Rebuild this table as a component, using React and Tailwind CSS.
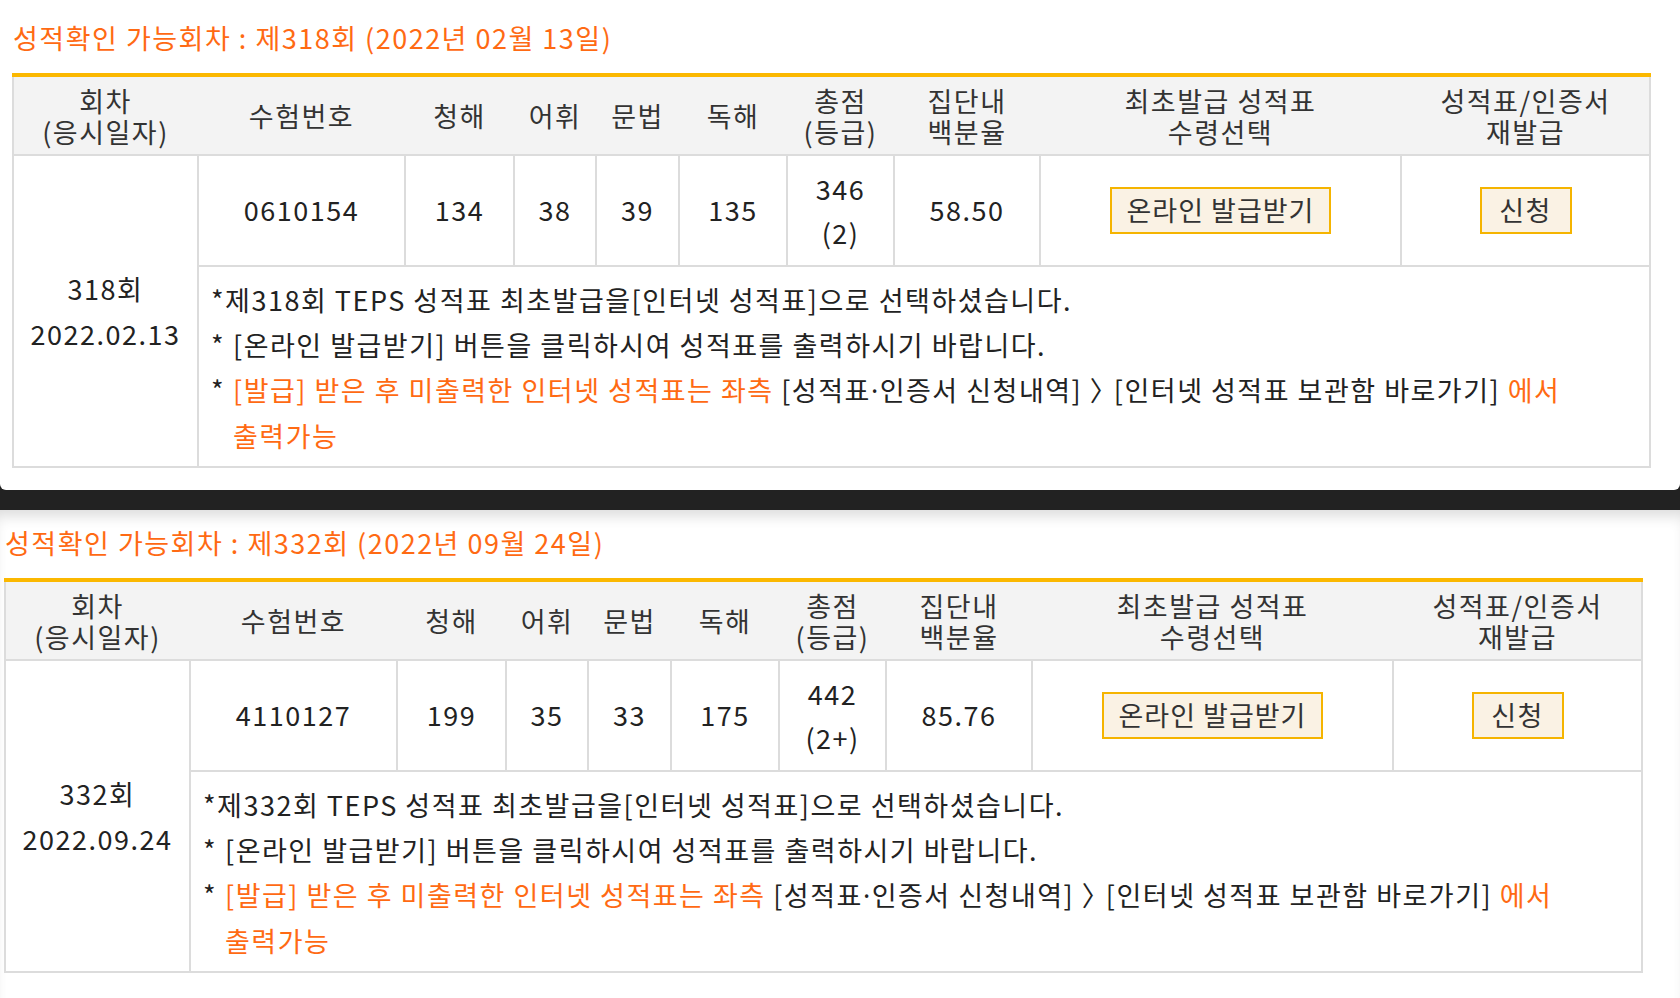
import React from 'react'

const sessions = [
  {
    no: '318',
    title: '제318회 (2022년 02월 13일)',
    date: '2022.02.13',
    examNo: '0610154',
    scores: ['134', '38', '39', '135'],
    total: '346',
    grade: '(2)',
    pct: '58.50',
  },
  {
    no: '332',
    title: '제332회 (2022년 09월 24일)',
    date: '2022.09.24',
    examNo: '4110127',
    scores: ['199', '35', '33', '175'],
    total: '442',
    grade: '(2+)',
    pct: '85.76',
  },
]

const cols = 'grid-cols-[183px_205px_107px_80px_81px_106px_105px_144px_359px_247px]'

function ScoreTable({ s }) {
  return (
    <div className="w-[1639px] border-t-4 border-[#fbb800]">
      {/* header */}
      <div className={`grid ${cols} gap-x-[2px] h-[77px] border-x-2 border-[#dcdcdc] bg-[#f3f3f3] text-[#333] leading-[31px] text-center`}>
        <div className="flex flex-col justify-center">회차<br />(응시일자)</div>
        <div className="flex items-center justify-center">수험번호</div>
        <div className="flex items-center justify-center">청해</div>
        <div className="flex items-center justify-center">어휘</div>
        <div className="flex items-center justify-center">문법</div>
        <div className="flex items-center justify-center">독해</div>
        <div className="flex flex-col justify-center">총점<br />(등급)</div>
        <div className="flex flex-col justify-center">집단내<br />백분율</div>
        <div className="flex flex-col justify-center">최초발급 성적표<br />수령선택</div>
        <div className="flex flex-col justify-center">성적표/인증서<br />재발급</div>
      </div>

      {/* body */}
      <div className={`grid ${cols} grid-rows-[109px_199px] gap-[2px] p-[2px] bg-[#dcdcdc] text-[#222] text-center`}>
        <div className="row-span-2 bg-white flex flex-col items-center justify-center leading-[45px]">
          <span>{s.no}회</span>
          <span>{s.date}</span>
        </div>
        <div className="bg-white flex items-center justify-center">{s.examNo}</div>
        {s.scores.map((v, i) => (
          <div key={i} className="bg-white flex items-center justify-center">{v}</div>
        ))}
        <div className="bg-white flex flex-col items-center justify-center leading-[44px]">
          <span>{s.total}</span>
          <span>{s.grade}</span>
        </div>
        <div className="bg-white flex items-center justify-center">{s.pct}</div>
        <div className="bg-white flex items-center justify-center">
          <button className="w-[221px] h-[47px] border-2 border-[#f5b400] bg-[#faf2e4] text-[#333] tracking-[1px]">온라인 발급받기</button>
        </div>
        <div className="bg-white flex items-center justify-center">
          <button className="w-[92px] h-[47px] border-2 border-[#f5b400] bg-[#faf2e4] text-[#333]">신청</button>
        </div>

        <div className="col-span-9 bg-white text-left text-[#222] leading-[45px] pt-[10px] pl-[12px] pr-[8px]">
          <p>*제{s.no}회 TEPS 성적표 최초발급을[인터넷 성적표]으로 선택하셨습니다.</p>
          <p className="flex">
            <span className="w-[22px] shrink-0">*</span>
            <span>[온라인 발급받기] 버튼을 클릭하시여 성적표를 출력하시기 바랍니다.</span>
          </p>
          <p className="flex">
            <span className="w-[22px] shrink-0">*</span>
            <span>
              <span className="text-[#ff6a13]">[발급] 받은 후 미출력한 인터넷 성적표는 좌측</span>{' '}
              [성적표<span className="font-['Noto_Sans',sans-serif]">·</span>인증서 신청내역]{' '}
              <span className="inline-block -mr-[12px]">〉</span>{' '}
              [인터넷 성적표 보관함 바로가기]{' '}
              <span className="text-[#ff6a13]">에서<br />출력가능</span>
            </span>
          </p>
        </div>
      </div>
    </div>
  )
}

export default function App() {
  return (
    <div className="min-h-[998px] bg-[#222] font-['Noto_Sans_CJK_KR','Noto_Sans',sans-serif] text-[27px] tracking-[1.5px]">
      {/* first capture */}
      <section className="h-[490px] bg-white rounded-b-[6px] pt-[18px]">
        <h2 className="pl-[13px] leading-[39px] text-[#ff6a13] font-normal">성적확인 가능회차 : {sessions[0].title}</h2>
        <div className="mt-[16px] ml-[12px]">
          <ScoreTable s={sessions[0]} />
        </div>
      </section>

      {/* second capture */}
      <section className="mt-[20px] h-[488px] bg-white pt-[13px] shadow-[inset_0_12px_14px_-6px_rgba(0,0,0,0.14)]">
        <h2 className="pl-[5px] leading-[39px] text-[#ff6a13] font-normal">성적확인 가능회차 : {sessions[1].title}</h2>
        <div className="mt-[16px] ml-[4px]">
          <ScoreTable s={sessions[1]} />
        </div>
      </section>
    </div>
  )
}
